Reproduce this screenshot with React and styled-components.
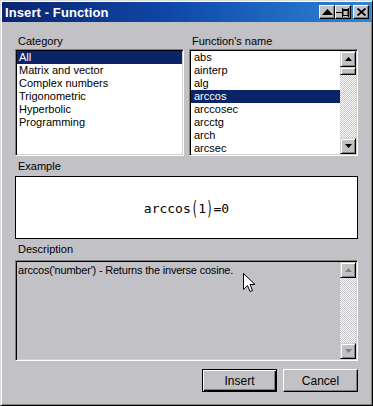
import React from 'react'
import styled, { createGlobalStyle } from 'styled-components'

const GRAY = '#c2c1c6'

const Global = createGlobalStyle`
    html, body {
        margin: 0;
        padding: 0;
        background: ${GRAY};
    }
    * {
        box-sizing: border-box;
    }
`

const Window = styled.div`
    position: relative;
    width: 373px;
    height: 406px;
    padding: 1px;
    background: ${GRAY};
    border: 1px solid;
    border-color: #dcdcdc #000 #000 #dcdcdc;
    box-shadow: inset 1px 1px #fff, inset -1px -1px #808080;
    font-family: "Liberation Sans", Arial, sans-serif;
    font-size: 11px;
    color: #000;
    display: flex;
    flex-direction: column;
`

const TitleBar = styled.div`
    height: 20px;
    display: flex;
    align-items: center;
    justify-content: space-between;
    padding: 0 2px 0 3px;
    background: linear-gradient(to right, #0a2470 0%, #0f47a8 45%, #2c86d6 100%);
`

const Title = styled.span`
    color: #fff;
    font-weight: bold;
    font-size: 13px;
    letter-spacing: 0.1px;
`

const Controls = styled.div`
    display: flex;
    align-items: center;
`

const CapButton = styled.div`
    width: 16px;
    height: 14px;
    margin-left: ${(p) => (p.$gap ? '2px' : '0')};
    background: ${GRAY};
    border: 1px solid;
    border-color: #fff #000 #000 #fff;
    box-shadow: inset -1px -1px #808080;
    display: flex;
    align-items: center;
    justify-content: center;
`

const Content = styled.div`
    flex: 1;
    display: flex;
    flex-direction: column;
    padding: 13px 13px 0 13px;
`

const Columns = styled.div`
    display: flex;
    gap: 5px;
`

const Column = styled.div`
    width: 169px;
    display: flex;
    flex-direction: column;
`

const Label = styled.div`
    height: 13px;
    line-height: 13px;
    padding-left: 3px;
    margin-bottom: ${(p) => p.$mb || 1}px;
    margin-top: ${(p) => p.$mt || 0}px;
`

const Sunken = styled.div`
    border: 1px solid;
    border-color: #808080 #fff #fff #808080;
    box-shadow: inset 1px 1px #000, inset -1px -1px #d4d0c8;
    padding: 1px;
`

const ListBox = styled(Sunken)`
    height: 107px;
    background: #fff;
    display: flex;
    overflow: hidden;
`

const Items = styled.div`
    flex: 1;
    display: flex;
    flex-direction: column;
`

const Item = styled.div`
    height: 13px;
    line-height: 13px;
    padding-left: ${(p) => p.$pad || 2}px;
    white-space: nowrap;
    background: ${(p) => (p.$selected ? '#0a246a' : 'transparent')};
    color: ${(p) => (p.$selected ? '#fff' : '#000')};
`

const ScrollBar = styled.div`
    width: 16px;
    display: flex;
    flex-direction: column;
    background: repeating-conic-gradient(#fff 0 25%, ${GRAY} 0 50%) 0 0 / 2px 2px;
`

const ScrollButton = styled.div`
    width: 16px;
    height: ${(p) => p.$h || 16}px;
    background: ${GRAY};
    border: 1px solid;
    border-color: #d4d0c8 #000 #000 #d4d0c8;
    box-shadow: inset 1px 1px #fff, inset -1px -1px #808080;
    display: flex;
    align-items: center;
    justify-content: center;
`

const Track = styled.div`
    flex: 1;
`

const ExampleBox = styled.div`
    height: 63px;
    background: #fff;
    border: 1px solid #000;
    display: flex;
    align-items: center;
    justify-content: center;
    font-family: "DejaVu Sans Mono", monospace;
    font-size: 13px;
    padding-top: 2px;
`

const Paren = styled.span`
    display: inline-block;
    font-size: 19px;
    font-weight: 300;
    transform: scaleX(0.55) translateY(-1px);
    margin: 0 -2px;
`

const DescBox = styled(Sunken)`
    height: 101px;
    background: ${GRAY};
    display: flex;
`

const DescText = styled.div`
    flex: 1;
    padding: 2px 0 0 1px;
    line-height: 13px;
    letter-spacing: -0.2px;
`

const Footer = styled.div`
    display: flex;
    justify-content: flex-end;
    gap: 6px;
    margin-top: 8px;
`

const Button = styled.div`
    width: 75px;
    height: 23px;
    display: flex;
    align-items: center;
    justify-content: center;
    background: ${GRAY};
    border: 1px solid;
    border-color: ${(p) => (p.$default ? '#000' : '#fff #000 #000 #fff')};
    box-shadow: ${(p) =>
        p.$default
            ? 'inset 1px 1px #fff, inset -1px -1px #000, inset -2px -2px #808080'
            : 'inset -1px -1px #808080'};
    font-size: 12px;
`

const Cursor = styled.svg`
    position: absolute;
    left: 242px;
    top: 272px;
`

const categories = ['All', 'Matrix and vector', 'Complex numbers', 'Trigonometric', 'Hyperbolic', 'Programming']
const functions = ['abs', 'ainterp', 'alg', 'arccos', 'arccosec', 'arcctg', 'arch', 'arcsec']

const Arrow = ({ down, color = '#000' }) => (
    <svg width="7" height="4" viewBox="0 0 7 4">
        <path d={down ? 'M0 0 H7 L3.5 4 Z' : 'M0 4 H7 L3.5 0 Z'} fill={color} />
    </svg>
)

const App = () => {
    return (
        <Window>
            <Global />
            <TitleBar>
                <Title>Insert - Function</Title>
                <Controls>
                    <CapButton>
                        <svg width="11" height="6" viewBox="0 0 11 6">
                            <path d="M0 6 H11 L5.5 0 Z" fill="#000" />
                        </svg>
                    </CapButton>
                    <CapButton>
                        <svg width="14" height="10" viewBox="0 0 14 10">
                            <path d="M0 5.5 H6 M6.5 1 V10 M12.5 1 V10" stroke="#000" strokeWidth="1" />
                            <rect x="7" y="2.5" width="5" height="6" fill="none" stroke="#000" />
                            <path d="M7 3.5 H12" stroke="#000" />
                        </svg>
                    </CapButton>
                    <CapButton $gap>
                        <svg width="9" height="8" viewBox="0 0 9 8">
                            <path d="M0.5 0.5 L8.5 7.5 M8.5 0.5 L0.5 7.5" stroke="#000" strokeWidth="1.8" />
                        </svg>
                    </CapButton>
                </Controls>
            </TitleBar>
            <Content>
                <Columns>
                    <Column>
                        <Label>Category</Label>
                        <ListBox>
                            <Items>
                                {categories.map((c, i) => (
                                    <Item key={c} $selected={i === 0}>{c}</Item>
                                ))}
                            </Items>
                        </ListBox>
                    </Column>
                    <Column>
                        <Label>Function's name</Label>
                        <ListBox>
                            <Items>
                                {functions.map((f) => (
                                    <Item key={f} $pad={3} $selected={f === 'arccos'}>{f}</Item>
                                ))}
                            </Items>
                            <ScrollBar>
                                <ScrollButton><Arrow /></ScrollButton>
                                <ScrollButton $h={8} />
                                <Track />
                                <ScrollButton><Arrow down /></ScrollButton>
                            </ScrollBar>
                        </ListBox>
                    </Column>
                </Columns>
                <Label $mt={4} $mb={3}>Example</Label>
                <ExampleBox>
                    arccos<Paren>(</Paren>1<Paren>)</Paren>=0
                </ExampleBox>
                <Label $mt={4} $mb={4}>Description</Label>
                <DescBox>
                    <DescText>arccos('number') - Returns the inverse cosine.</DescText>
                    <ScrollBar>
                        <ScrollButton><Arrow color="#808080" /></ScrollButton>
                        <Track />
                        <ScrollButton><Arrow down color="#808080" /></ScrollButton>
                    </ScrollBar>
                </DescBox>
                <Footer>
                    <Button $default>Insert</Button>
                    <Button>Cancel</Button>
                </Footer>
            </Content>
            <Cursor width="13" height="21" viewBox="0 0 13 21">
                <path d="M0.5 0.5 V16.5 L4.5 12.5 L7 18.5 L9.5 17.5 L7 11.5 H12 Z" fill="#fff" stroke="#000" strokeWidth="1" strokeLinejoin="miter" />
            </Cursor>
        </Window>
    )
}

export default App
